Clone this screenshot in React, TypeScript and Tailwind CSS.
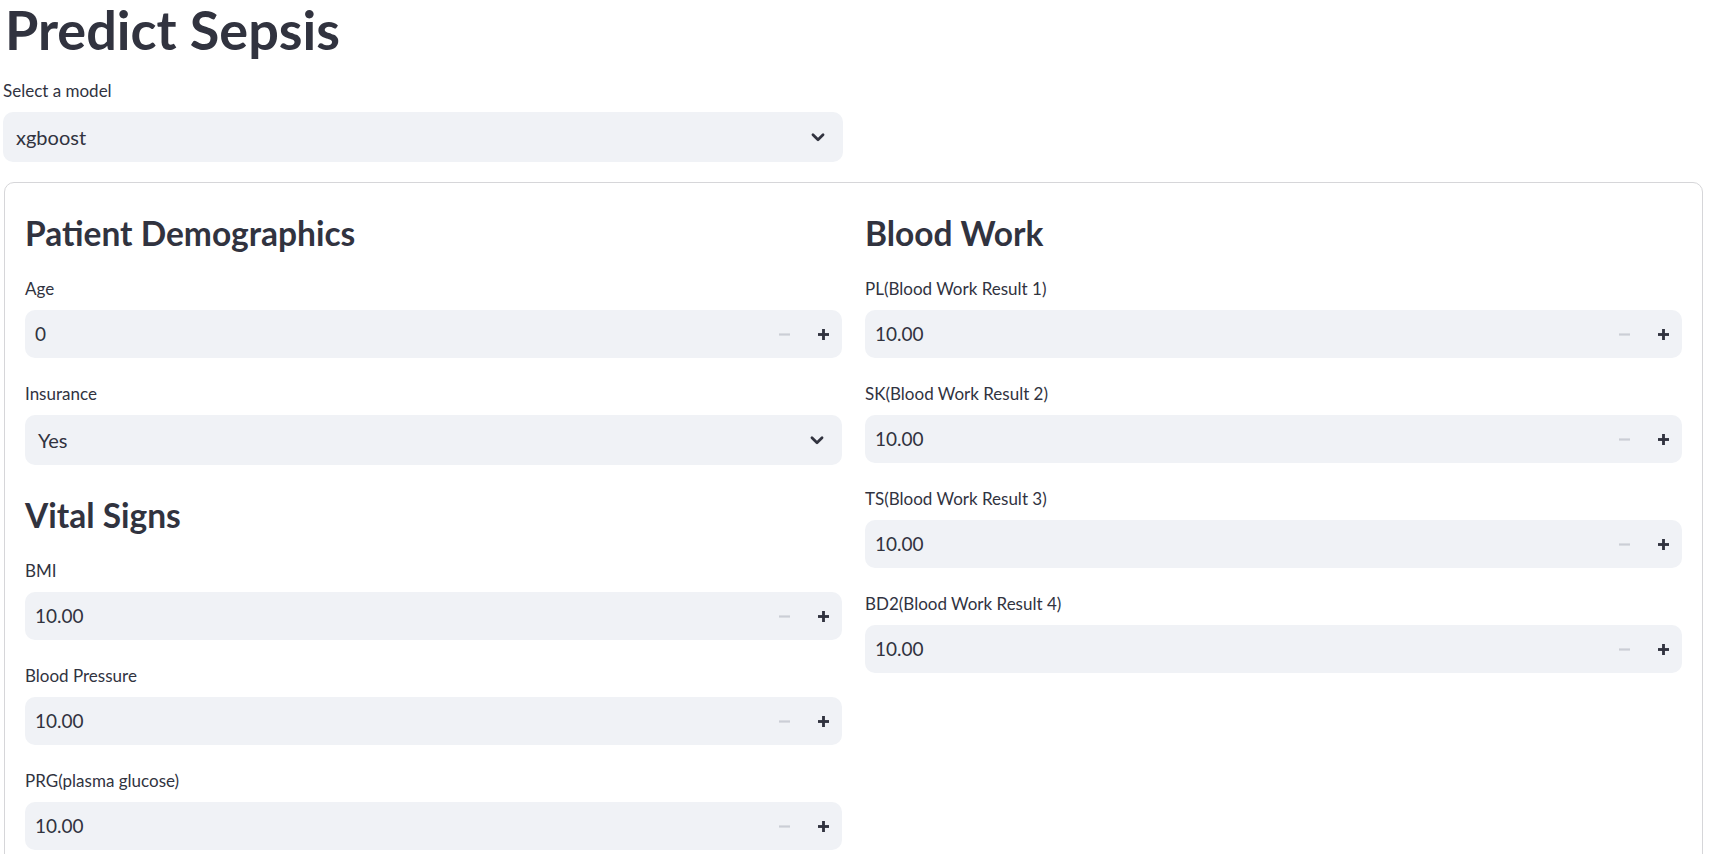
import React from "react";

const ChevronDown = () => (
  <svg width="22" height="22" viewBox="0 0 24 24" fill="none" stroke="#31333f" strokeWidth="3" strokeLinecap="round" strokeLinejoin="round">
    <path d="M6.5 9.5l5.5 5.5 5.5-5.5" />
  </svg>
);

const Minus = () => (
  <svg width="11" height="11" viewBox="0 0 10 10">
    <line x1="0" y1="5" x2="10" y2="5" stroke="#cbced6" strokeWidth="2" />
  </svg>
);

const Plus = () => (
  <svg width="11" height="11" viewBox="0 0 10 10">
    <line x1="0" y1="5" x2="10" y2="5" stroke="#31333f" strokeWidth="2.6" />
    <line x1="5" y1="0" x2="5" y2="10" stroke="#31333f" strokeWidth="2.6" />
  </svg>
);

function Label({ children }: { children: React.ReactNode }) {
  return <div className="h-[31px] mb-[6px] flex items-center text-[17px] leading-none">{children}</div>;
}

function NumberField({ label, value }: { label: string; value: string }) {
  return (
    <div>
      <Label>{label}</Label>
      <div className="h-[48px] rounded-[10px] bg-[#f0f2f6] flex items-center">
        <span className="flex-1 pl-[10px] text-[19px]">{value}</span>
        <span className="w-[40px] h-full flex items-center justify-center">
          <Minus />
        </span>
        <span className="w-[38px] h-full flex items-center justify-center">
          <Plus />
        </span>
      </div>
    </div>
  );
}

function SelectField({ label, value, className = "" }: { label: string; value: string; className?: string }) {
  return (
    <div className={className}>
      <Label>{label}</Label>
      <div className="h-[50px] rounded-[10px] bg-[#f0f2f6] flex items-center justify-between pl-[13px] pr-[14px]">
        <span className="text-[20px]">{value}</span>
        <ChevronDown />
      </div>
    </div>
  );
}

function Heading({ children }: { children: React.ReactNode }) {
  return <h3 className="h-[50px] pt-[10px] text-[33.5px] leading-[40px] font-bold">{children}</h3>;
}

export default function App() {
  return (
    <div className="min-h-screen bg-white text-[#31333f] font-['Lato','Noto_Sans',sans-serif]">
      <div className="w-[1703px] pl-[3px]">
        <h1 className="h-[55px] pt-[2px] text-[54px] leading-[55px] font-bold pl-[2px]">Predict Sepsis</h1>

        <SelectField label="Select a model" value="xgboost" className="mt-[20px] w-[840px]" />

        <div className="mt-[20px] ml-[1px] border border-[#d6d6d9] rounded-[10px] p-[20px] pb-[40px] grid grid-cols-2 gap-x-[23px]">
          <div className="flex flex-col gap-[20px]">
            <Heading>Patient Demographics</Heading>
            <NumberField label="Age" value="0" />
            <SelectField label="Insurance" value="Yes" />
            <Heading>Vital Signs</Heading>
            <NumberField label="BMI" value="10.00" />
            <NumberField label="Blood Pressure" value="10.00" />
            <NumberField label="PRG(plasma glucose)" value="10.00" />
          </div>
          <div className="flex flex-col gap-[20px]">
            <Heading>Blood Work</Heading>
            <NumberField label="PL(Blood Work Result 1)" value="10.00" />
            <NumberField label="SK(Blood Work Result 2)" value="10.00" />
            <NumberField label="TS(Blood Work Result 3)" value="10.00" />
            <NumberField label="BD2(Blood Work Result 4)" value="10.00" />
          </div>
        </div>
      </div>
    </div>
  );
}
